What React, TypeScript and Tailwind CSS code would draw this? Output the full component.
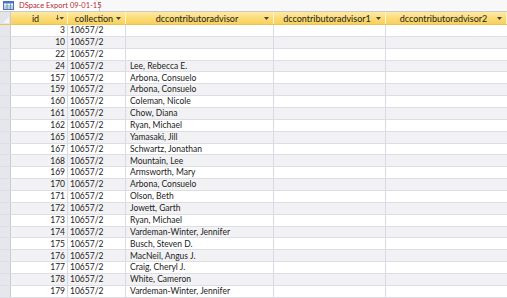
const rows: [number, string][] = [
  [3, ""],
  [10, ""],
  [22, ""],
  [24, "Lee, Rebecca E."],
  [157, "Arbona, Consuelo"],
  [159, "Arbona, Consuelo"],
  [160, "Coleman, Nicole"],
  [161, "Chow, Diana"],
  [162, "Ryan, Michael"],
  [165, "Yamasaki, Jill"],
  [167, "Schwartz, Jonathan"],
  [168, "Mountain, Lee"],
  [169, "Armsworth, Mary"],
  [170, "Arbona, Consuelo"],
  [171, "Olson, Beth"],
  [172, "Jowett, Garth"],
  [173, "Ryan, Michael"],
  [174, "Vardeman-Winter, Jennifer"],
  [175, "Busch, Steven D."],
  [176, "MacNeil, Angus J."],
  [177, "Craig, Cheryl J."],
  [178, "White, Cameron"],
  [179, "Vardeman-Winter, Jennifer"],
];

const headers = [
  "collection",
  "dccontributoradvisor",
  "dccontributoradvisor1",
  "dccontributoradvisor2",
];

const gridCols = "grid grid-cols-[11px_57px_58px_148px_112px_1fr]";

function DropArrow() {
  return (
    <svg width="5" height="3" viewBox="0 0 5 3" className="shrink-0">
      <path d="M0 0h5L2.5 3z" fill="#444" />
    </svg>
  );
}

function SortIcon() {
  return (
    <svg width="8" height="6" viewBox="0 0 8 6" className="shrink-0">
      <path d="M1.5 0v4.5M0.2 3.2 1.5 4.7 2.8 3.2" stroke="#444" strokeWidth="0.8" fill="none" />
      <path d="M3.5 2h4.5L5.75 4.5z" fill="#444" />
    </svg>
  );
}

function TableIcon() {
  return (
    <svg width="11" height="9" viewBox="0 0 11 9" className="shrink-0">
      <rect x="0.5" y="0.5" width="10" height="8" fill="#fff" stroke="#4a76b8" />
      <rect x="0.5" y="0.5" width="10" height="2" fill="#4a76b8" />
      <path d="M0.5 5h10M0.5 7h10M4 2.5v6M7.5 2.5v6" stroke="#4a76b8" strokeWidth="0.7" />
    </svg>
  );
}

export default function App() {
  return (
    <div className="w-[507px] h-[298px] overflow-hidden bg-white font-['Lato','Liberation_Sans',sans-serif] text-[#222]">
      {/* object tab strip */}
      <div className="flex h-[12px] bg-[#f8f8f8] border-b border-[#c9c9c9]">
        <div className="flex items-center gap-[5px] pl-[3px] w-[100px] bg-white border-r border-[#c9c9c9] rounded-tr-[6px]">
          <TableIcon />
          <span className="text-[7.5px] leading-none text-[#b1282f] whitespace-nowrap">
            DSpace Export 09-01-15
          </span>
        </div>
      </div>

      {/* header row */}
      <div className={`${gridCols} h-[13px] bg-gradient-to-b from-[#fdeaa8] via-[#fbdc76] to-[#f8d15e] border-b border-[#e9c45a]`}>
        <div className="relative bg-[#e3e4e9] border-r border-[#c8cad4]">
          <div className="absolute right-[1px] bottom-[1px] w-0 h-0 border-l-[6px] border-l-transparent border-b-[6px] border-b-[#f6f6f8]" />
        </div>
        <div className="flex items-center pl-[4px] pr-[3px] border-r border-[#fff3c8]">
          <span className="flex-1 text-center text-[9px] leading-none">id</span>
          <SortIcon />
        </div>
        {headers.map((h) => (
          <div key={h} className="flex items-center pl-[4px] pr-[4px] border-r border-[#fff3c8]">
            <span className="flex-1 text-center text-[9px] leading-none whitespace-nowrap">{h}</span>
            <DropArrow />
          </div>
        ))}
      </div>

      {/* data rows */}
      {rows.map(([id, advisor], i) => (
        <div
          key={id}
          className={`${gridCols} h-[11.87px] border-b border-[#dcdde6] text-[8.5px] leading-none ${
            i % 2 === 0 ? "bg-white" : "bg-[#f2f2f4]"
          }`}
        >
          <div className="bg-[#e6e7ed] border-r border-[#c8cad4]" />
          <div className="flex items-center justify-end pr-[2px] border-r border-[#d8dae5]">{id}</div>
          <div className="flex items-center pl-[2px] border-r border-[#d8dae5]">10657/2</div>
          <div className="flex items-center pl-[4px] border-r border-[#d8dae5] whitespace-nowrap">{advisor}</div>
          <div className="border-r border-[#d8dae5]" />
          <div />
        </div>
      ))}
    </div>
  );
}
